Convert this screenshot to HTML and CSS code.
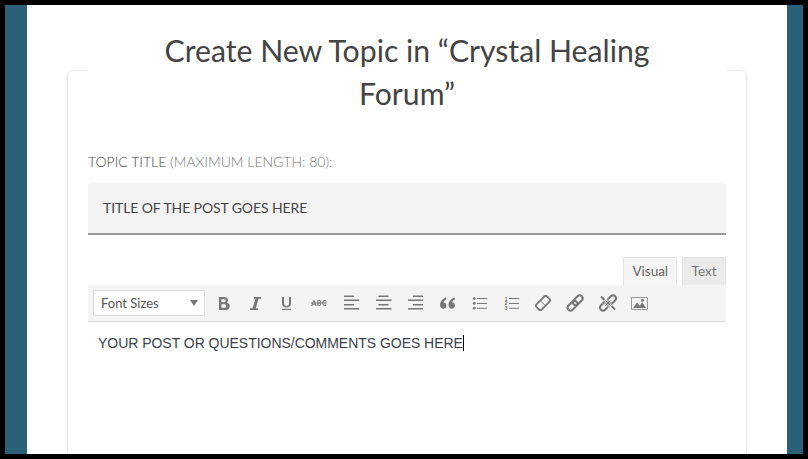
FILE: index.html
```html
<!DOCTYPE html>
<html lang="en">
<head>
    <meta charset="UTF-8">
    <meta name="viewport" content="width=device-width, initial-scale=1.0">
    <title>Create New Topic</title>
    <link rel="stylesheet" href="styles.css">
</head>
<body>
    <div class="page">
        <div class="sheet">
            <div class="topic-card">
                <h1 class="topic-heading">Create New Topic in “Crystal Healing Forum”</h1>

                <label class="field-label">Topic Title <span class="field-hint">(Maximum Length: 80):</span></label>
                <div class="title-input">TITLE OF THE POST GOES HERE</div>

                <div class="editor-tabs">
                    <span class="tab tab-active">Visual</span>
                    <span class="tab">Text</span>
                </div>

                <div class="toolbar">
                    <div class="font-select">Font Sizes<span class="caret"></span></div>
                    <div class="tools">
                        <!-- bold -->
                        <svg class="tool" viewBox="0 0 16 16"><path fill-rule="evenodd" d="M4 2h5.600a3.300 3.300 0 0 1 2.300 5.700A3.700 3.700 0 0 1 10 15H4zM6.400 4.200v3h2.800a1.500 1.500 0 0 0 0-3zM6.400 9.300v3.500h3.200a1.750 1.750 0 0 0 0-3.500z"/></svg>
                        <!-- italic -->
                        <svg class="tool" viewBox="0 0 16 16"><path d="M7 2h7v1.700h-2.400L8.700 13.300H11V15H3v-1.700h2.500L8.400 3.700H7z"/></svg>
                        <!-- underline -->
                        <svg class="tool" viewBox="0 0 16 16"><path d="M3 2h2v6.500c0 3.200 5 3.200 5 0V2h2v6.500c0 5.400-9 5.400-9 0zM3 13.700h9V15H3z"/></svg>
                        <!-- strikethrough -->
                        <svg class="tool" viewBox="0 0 16 16"><path d="M0 7.500h16v1H0z"/><path d="M.2 11 2.400 5h1l2.200 6H4.500l-.4-1.200H1.700L1.300 11zM2 9h1.800l-.9-2.700zM6.400 5h2.100c1.500 0 1.800 2.300.6 2.800 1.500.4 1.300 3.200-.6 3.200H6.400zM7.400 5.800v1.700h1c.9 0 .9-1.700 0-1.700zM7.400 8.300v1.900h1.100c1 0 1-1.900 0-1.900zM15.700 6.300l-.8.4c-.8-1.500-2.500-.8-2.500 1.300s1.700 2.800 2.500 1.300l.8.4c-1.200 2.200-4.300 1.200-4.300-1.700s3.100-3.900 4.300-1.700z"/></svg>
                        <!-- align left, center, right -->
                        <svg class="tool" viewBox="0 0 16 16"><path d="M1 .6h10v1.500H1zM1 4.600h15v1.500H1zM1 9h10v1.500H1zM1 13h15v1.500H1z"/></svg>
                        <svg class="tool" viewBox="0 0 16 16"><path d="M3.500.6h10v1.500h-10zM1 4.600h15.500v1.500H1zM3.500 9h10v1.500h-10zM1 13h15.500v1.500H1z"/></svg>
                        <svg class="tool" viewBox="0 0 16 16"><path d="M6 .6h10v1.500H6zM1 4.600h15v1.500H1zM6 9h10v1.500H6zM1 13h15v1.500H1z"/></svg>
                        <!-- blockquote -->
                        <svg class="tool" viewBox="0 0 16 16"><path d="M7 2.500C3.500 4 1 6.500 1 10c0 2.300 1.400 3.700 3.300 3.700 1.800 0 3.200-1.300 3.200-3.200S6.300 7.500 4.600 7.500C4.900 6.300 5.900 5.200 7.300 4.500zM15.500 2.500C12 4 9.500 6.500 9.500 10c0 2.300 1.400 3.700 3.300 3.700 1.800 0 3.200-1.300 3.200-3.200s-1.200-3-2.900-3c.3-1.200 1.300-2.300 2.700-3z"/></svg>
                        <!-- lists -->
                        <svg class="tool" viewBox="0 0 16 16"><circle cx="3.300" cy="3.600" r="1.400"/><circle cx="3.300" cy="8.400" r="1.400"/><circle cx="3.300" cy="13.200" r="1.400"/><path d="M6 3.100h10v1H6zM6 7.900h10v1H6zM6 12.700h10v1H6z"/></svg>
                        <svg class="tool tool-numbers" viewBox="0 0 16 16"><text x="1.500" y="5.500">1</text><text x="1.500" y="10.300">2</text><text x="1.500" y="15">3</text><path d="M6 3.100h10v1H6zM6 7.900h10v1H6zM6 12.700h10v1H6z"/></svg>
                        <!-- clear formatting -->
                        <svg class="tool" viewBox="0 0 16 16"><rect class="eraser" x=".5" y="4.300" width="15" height="7.400" rx="2" transform="rotate(-45 8 8)"/><path class="line" d="M5.500 5.800 10.200 10.500"/></svg>
                        <!-- link -->
                        <svg class="tool" viewBox="0 0 16 16"><rect class="line line-thick" x="-.2" y="7.700" width="11.400" height="6" rx="3" transform="rotate(-45 5.500 10.700)"/><rect class="line line-thick" x="5" y="2.300" width="11.400" height="6" rx="3" transform="rotate(-45 10.700 5.300)"/></svg>
                        <!-- unlink -->
                        <svg class="tool" viewBox="0 0 16 16"><rect class="line line-thick" x="8" y="1.700" width="9.500" height="6" rx="3" transform="rotate(-45 12.700 4.700)"/><rect class="line line-thick" x=".5" y="8.300" width="9.500" height="6" rx="3" transform="rotate(-45 5.300 11.300)"/><path class="line line-thick" d="M2 1.500l3.500 3.500M16 14.500 12.500 11"/><circle class="gap" cx="9" cy="8" r="3.400"/><path class="line" d="M6.500 5.500l5 5M11.500 5.500l-5 5M9 4.500v7M5.500 8h7"/></svg>
                        <!-- image -->
                        <svg class="tool" viewBox="0 0 16 16"><path class="line line-image" d="M.5 2.500h16v12H.5z"/><path d="M2 13l4-5.500 2.800 3.300 2.400-3.600 3.800 5.800z"/><circle cx="11.500" cy="5.300" r="1.500"/></svg>
                    </div>
                </div>

                <div class="editor-body">YOUR POST OR QUESTIONS/COMMENTS GOES HERE<span class="text-cursor"></span></div>
            </div>
        </div>
    </div>
</body>
</html>
```

FILE: styles.css
```css
html, body {
    margin: 0;
    overflow: hidden;
}

body {
    background: #000;
    font-family: Lato, "Liberation Sans", sans-serif;
    color: #444;
}

.page {
    box-sizing: border-box;
    height: 449px;
    margin: 5px;
    padding: 0 16px 0 22px;
    background: #2a6179;
}

.sheet {
    height: 100%;
    padding: 0 40px;
    background: #fff;
    overflow: hidden;
}

.topic-card {
    height: 600px;
    margin-top: 65px;
    padding: 0 20px;
    border: 1px solid #e8e8e8;
    border-radius: 6px;
}

.topic-heading {
    margin: -42px 0 0;
    padding: 0 60px;
    background: #fff;
    font-size: 30.2px;
    font-weight: 400;
    line-height: 42.5px;
    text-align: center;
    color: #444;
}

.field-label {
    display: block;
    margin-top: 38px;
    font-size: 14px;
    font-weight: 300;
    line-height: 20px;
    text-transform: uppercase;
    color: #444;
}

.field-hint {
    color: #777;
}

.title-input {
    box-sizing: border-box;
    height: 52px;
    margin-top: 11px;
    padding: 0 15px;
    background: #f3f3f3;
    border-bottom: 2px solid #999;
    border-radius: 3px 3px 0 0;
    font-size: 14px;
    letter-spacing: -0.1px;
    line-height: 50px;
}

.editor-tabs {
    display: flex;
    justify-content: flex-end;
    gap: 5px;
    margin-top: 22px;
}

.tab {
    box-sizing: border-box;
    height: 28px;
    padding: 0 8.5px;
    background: #ebebeb;
    border: 1px solid #e4e4e4;
    border-bottom: 0;
    font-size: 13.5px;
    line-height: 26px;
    color: #777;
}

.tab-active {
    padding: 0 8px;
    background: #f5f5f5;
    color: #666;
}

.toolbar {
    box-sizing: border-box;
    display: flex;
    align-items: center;
    gap: 10px;
    height: 37px;
    padding: 0 5px;
    background: #f4f4f4;
    border-bottom: 1px solid #ddd;
}

.font-select {
    box-sizing: border-box;
    display: flex;
    align-items: center;
    justify-content: space-between;
    width: 112px;
    height: 26px;
    padding: 0 6px 0 7px;
    background: #fff;
    border: 1px solid #ddd;
    font-size: 13px;
    color: #555;
}

.caret {
    border-top: 6px solid #777;
    border-left: 4px solid transparent;
    border-right: 4px solid transparent;
}

.tools {
    display: flex;
    align-items: center;
    gap: 16px;
}

.tool {
    flex: none;
    width: 16px;
    height: 16px;
    fill: #777;
    overflow: visible;
}

.tool-numbers text {
    font-family: "Liberation Sans", sans-serif;
    font-size: 5.5px;
    font-weight: bold;
}

.line {
    fill: none;
    stroke: #777;
    stroke-width: 1;
}

.line-thick {
    stroke-width: 2;
}

.line-image {
    stroke: #999;
}

.gap {
    fill: #f4f4f4;
}

.eraser {
    fill: #fbfbfb;
    stroke: #777;
    stroke-width: 1.800;
}

.editor-body {
    padding: 12px 10px;
    font-family: "Liberation Sans", Arial, sans-serif;
    font-size: 14px;
    letter-spacing: -0.03px;
    line-height: 18px;
    color: #3a3f4a;
}

.text-cursor {
    display: inline-block;
    width: 1px;
    height: 16px;
    background: #000;
    vertical-align: -3px;
}
```
